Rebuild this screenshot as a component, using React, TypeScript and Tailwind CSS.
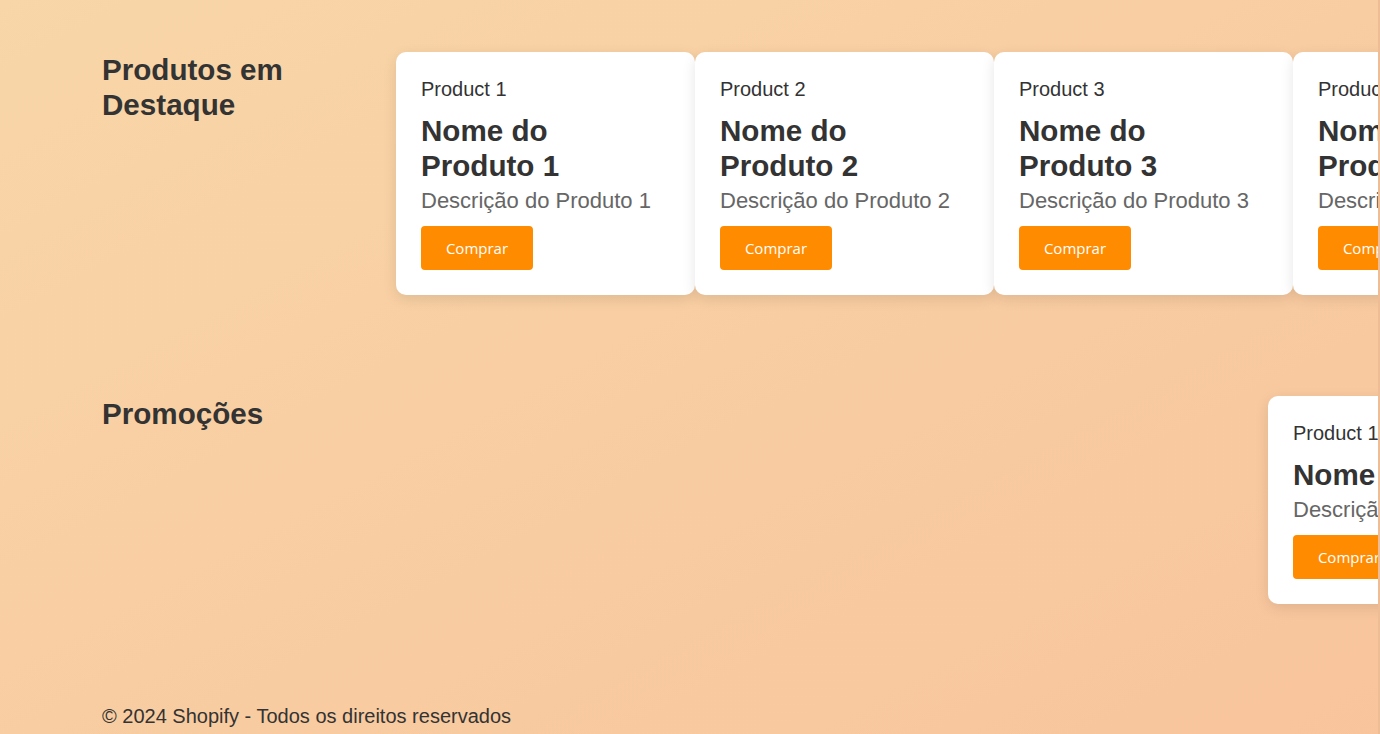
import React from 'react';

type Product = { id: number; label: string; name: string; description: string };

const featured: Product[] = [1, 2, 3, 4].map((n) => ({
  id: n,
  label: `Product ${n}`,
  name: `Nome do Produto ${n}`,
  description: `Descrição do Produto ${n}`,
}));

function ProductCard({ product, wide }: { product: Product; wide?: boolean }) {
  return (
    <div
      className={`${wide ? 'w-[340px]' : 'w-[299px]'} shrink-0 rounded-[10px] bg-white p-[25px] shadow-[0_4px_14px_rgba(0,0,0,0.1)]`}
    >
      <p className="text-[20px] leading-[24px] text-[#333]">{product.label}</p>
      <h3
        className={`${wide ? '' : 'max-w-[200px]'} mt-[12px] text-[29.6px] font-bold leading-[35px] text-[#333]`}
      >
        {product.name}
      </h3>
      <p className="mt-[5px] text-[22px] leading-[26px] text-[#666]">{product.description}</p>
      <button className="mt-[12px] h-[44px] w-[112px] rounded-[4px] bg-[#ff8c00] text-[15px] text-white [font-family:'Open_Sans',sans-serif]">
        Comprar
      </button>
    </div>
  );
}

export default function App() {
  return (
    <div className="relative min-h-screen w-full overflow-hidden bg-gradient-to-br from-[#f8d6a7] to-[#f8c49c] text-[#333] [font-family:'Liberation_Sans',Arial,sans-serif]">
      <div className="absolute right-0 top-0 h-full w-[2px] bg-[#efbd95]" />
      <main className="pl-[102px] pt-[52px]">
        <section className="flex">
          <h2 className="mr-[94px] w-[200px] shrink-0 text-[29.6px] font-bold leading-[35px]">
            Produtos em Destaque
          </h2>
          <div className="flex">
            {featured.map((p) => (
              <ProductCard key={p.id} product={p} />
            ))}
          </div>
        </section>

        <section className="mt-[101px] flex">
          <h2 className="w-[294px] shrink-0 text-[29.6px] font-bold leading-[35px]">Promoções</h2>
          <div className="flex pl-[872px]">
            <ProductCard product={featured[0]} wide />
          </div>
        </section>

        <footer className="mt-[100px] pb-[20px]">
          <p className="text-[20px] leading-[24px]">© 2024 Shopify - Todos os direitos reservados</p>
        </footer>
      </main>
    </div>
  );
}
